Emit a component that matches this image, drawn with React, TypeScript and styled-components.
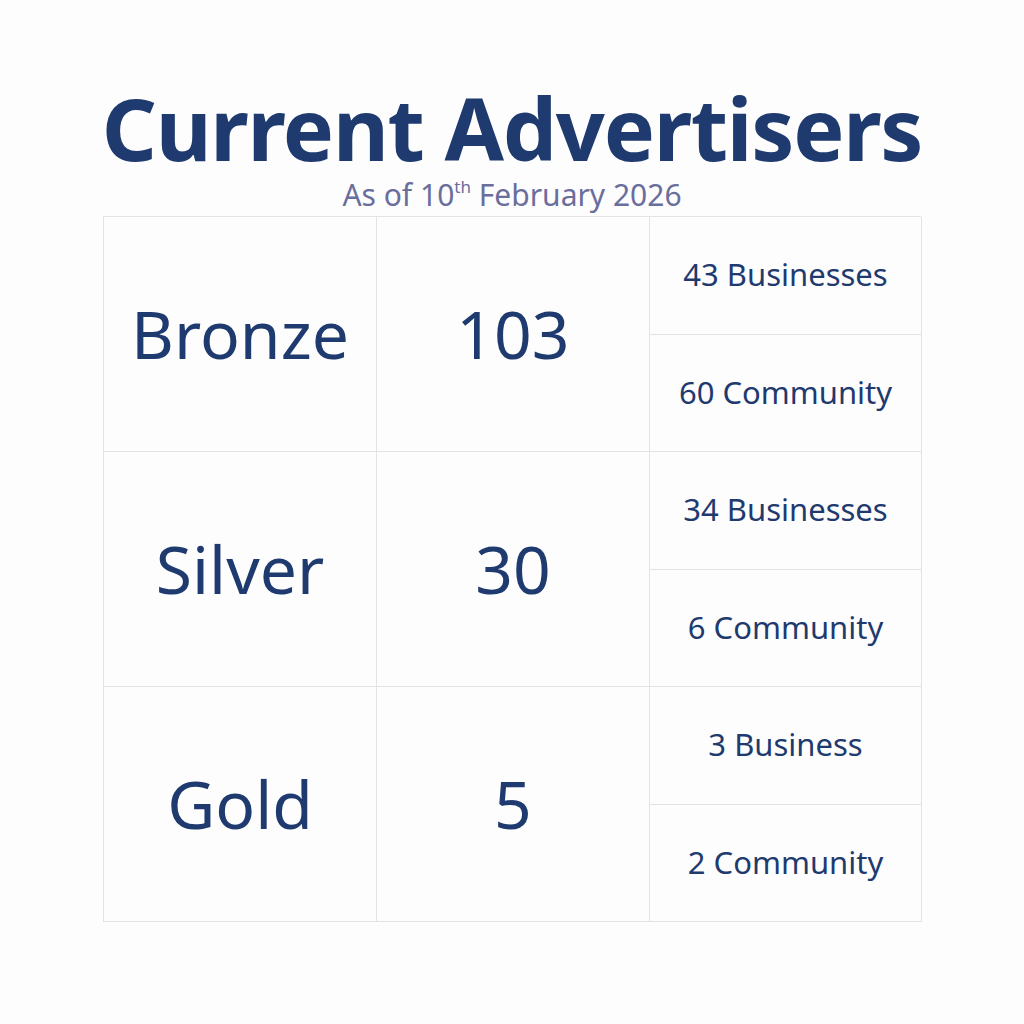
import React from 'react';
import styled, { createGlobalStyle } from 'styled-components';

const GlobalStyle = createGlobalStyle`
  html, body {
    margin: 0;
    padding: 0;
    background: #fdfdfd;
  }
  body {
    font-family: "Noto Sans", "Open Sans", sans-serif;
  }
`;

const Page = styled.div`
  width: 1024px;
  height: 1024px;
  display: flex;
  flex-direction: column;
  align-items: center;
  padding-top: 82px;
  box-sizing: border-box;
  color: #1f3a6e;
`;

const Title = styled.h1`
  margin: 0;
  font-size: 86px;
  font-weight: 700;
  line-height: 92px;
  letter-spacing: -1.3px;
`;

const Subtitle = styled.div`
  margin-top: 3px;
  font-size: 30px;
  line-height: 36px;
  color: #6a6e9c;
  sup {
    font-size: 17px;
    line-height: 0;
    vertical-align: 13px;
  }
`;

const Table = styled.div`
  margin-top: 3px;
  width: 818px;
  display: grid;
  grid-template-columns: 273px 273px 272px;
  border-left: 1px solid #e3e3e3;
  border-top: 1px solid #e3e3e3;
  box-sizing: border-box;
`;

const Cell = styled.div`
  height: 235px;
  box-sizing: border-box;
  border-right: 1px solid #e3e3e3;
  border-bottom: 1px solid #e3e3e3;
  display: flex;
  align-items: center;
  justify-content: center;
  font-size: 66px;
  padding-bottom: 2px;
`;

const Split = styled.div`
  display: grid;
  grid-template-rows: 1fr 1fr;
  height: 235px;
`;

const SubCell = styled.div`
  box-sizing: border-box;
  border-right: 1px solid #e3e3e3;
  border-bottom: 1px solid #e3e3e3;
  display: flex;
  align-items: center;
  justify-content: center;
  font-size: 31px;
  padding-bottom: 2px;
`;

interface Tier {
  name: string;
  total: number;
  businesses: string;
  community: string;
}

const tiers: Tier[] = [
  { name: 'Bronze', total: 103, businesses: '43 Businesses', community: '60 Community' },
  { name: 'Silver', total: 30, businesses: '34 Businesses', community: '6 Community' },
  { name: 'Gold', total: 5, businesses: '3 Business', community: '2 Community' },
];

const App: React.FC = () => {
  return (
    <Page>
      <GlobalStyle />
      <Title>Current Advertisers</Title>
      <Subtitle>
        As of 10<sup>th</sup> February 2026
      </Subtitle>
      <Table>
        {tiers.map((tier) => (
          <React.Fragment key={tier.name}>
            <Cell>{tier.name}</Cell>
            <Cell>{tier.total}</Cell>
            <Split>
              <SubCell>{tier.businesses}</SubCell>
              <SubCell>{tier.community}</SubCell>
            </Split>
          </React.Fragment>
        ))}
      </Table>
    </Page>
  );
};

export default App;
